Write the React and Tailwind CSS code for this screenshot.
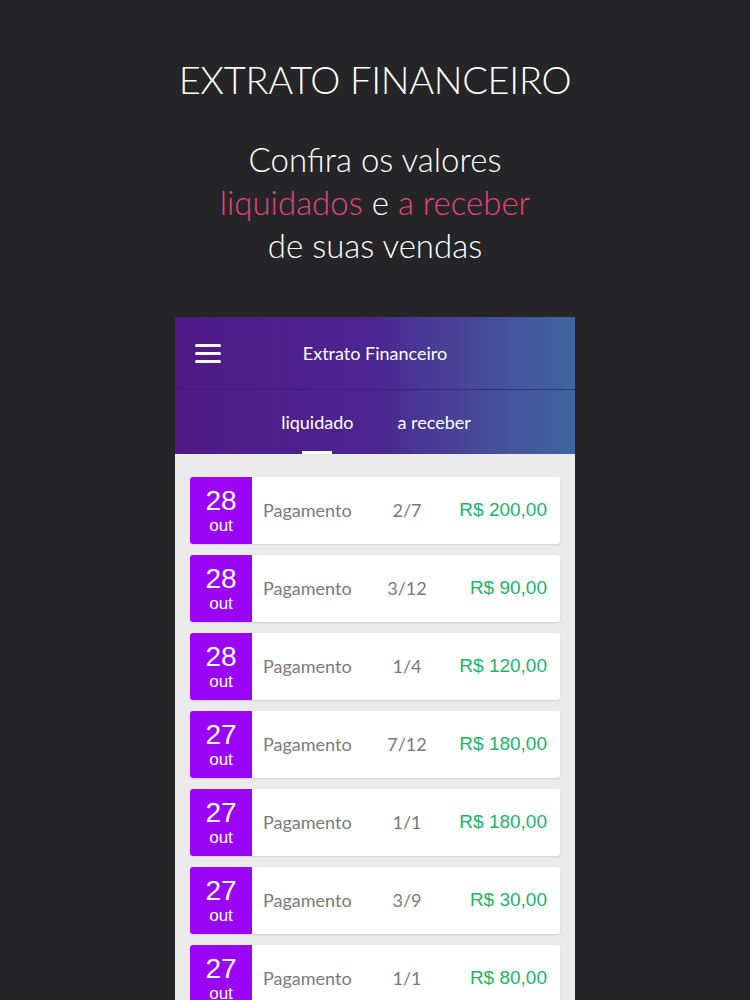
import React from "react";

const rows = [
  { day: "28", part: "2/7", value: "R$ 200,00" },
  { day: "28", part: "3/12", value: "R$ 90,00" },
  { day: "28", part: "1/4", value: "R$ 120,00" },
  { day: "27", part: "7/12", value: "R$ 180,00" },
  { day: "27", part: "1/1", value: "R$ 180,00" },
  { day: "27", part: "3/9", value: "R$ 30,00" },
  { day: "27", part: "1/1", value: "R$ 80,00" },
];

const App = () => {
  return (
    <div className="h-[1000px] w-[750px] overflow-hidden bg-[#252427] font-['Lato',sans-serif] text-white">
      <h1 className="pt-[56px] text-center text-[38px] font-light leading-[46px] tracking-[-0.3px]">
        EXTRATO FINANCEIRO
      </h1>

      <p className="mt-[36px] text-center text-[33px] font-light leading-[43px]">
        Confira os valores
        <br />
        <span className="text-[#e4457d]">liquidados</span> e{" "}
        <span className="text-[#e4457d]">a receber</span>
        <br />
        de suas vendas
      </p>

      <div className="mx-auto mt-[50px] w-[400px]">
        <div className="bg-gradient-to-r from-[#4f1a88] via-[#4a2590] to-[#3d66a0]">
          <div className="relative flex h-[73px] items-center border-b border-[#3a1d6a]/70">
            <div className="ml-[20px] flex w-[26px] flex-col gap-[5px]">
              <span className="h-[3px] rounded-full bg-white" />
              <span className="h-[3px] rounded-full bg-white" />
              <span className="h-[3px] rounded-full bg-white" />
            </div>
            <span className="absolute left-0 right-0 text-center text-[18px] text-white">
              Extrato Financeiro
            </span>
          </div>
          <div className="flex h-[64px] items-stretch justify-center gap-[44px] pl-[2px]">
            <div className="relative flex items-center">
              <span className="text-[18px]">liquidado</span>
              <span className="absolute bottom-0 left-1/2 h-[3px] w-[30px] -translate-x-1/2 bg-white" />
            </div>
            <div className="flex items-center">
              <span className="text-[18px]">a receber</span>
            </div>
          </div>
        </div>

        <div className="flex h-[600px] flex-col gap-[11px] bg-[#ebebeb] px-[15px] pt-[23px]">
          {rows.map((r, i) => (
            <div
              key={i}
              className="flex h-[67px] shrink-0 items-center overflow-hidden rounded-[3px] bg-white shadow-[0_1px_2px_rgba(0,0,0,0.12)]"
            >
              <div className="flex h-full w-[62px] flex-col items-center justify-center bg-[#9a05f7] font-['Liberation_Sans',sans-serif] text-white">
                <span className="text-[28px] leading-[30px]">{r.day}</span>
                <span className="text-[17px] leading-[19px]">out</span>
              </div>
              <span className="ml-[11px] w-[100px] text-[18px] text-[#7a7a7a]">
                Pagamento
              </span>
              <span className="w-[88px] text-center text-[18px] text-[#7a7a7a]">
                {r.part}
              </span>
              <span className="flex-1 pr-[13px] text-right font-['Liberation_Sans',sans-serif] text-[19px] text-[#22b36b]">
                {r.value}
              </span>
            </div>
          ))}
        </div>
      </div>
    </div>
  );
};

export default App;
